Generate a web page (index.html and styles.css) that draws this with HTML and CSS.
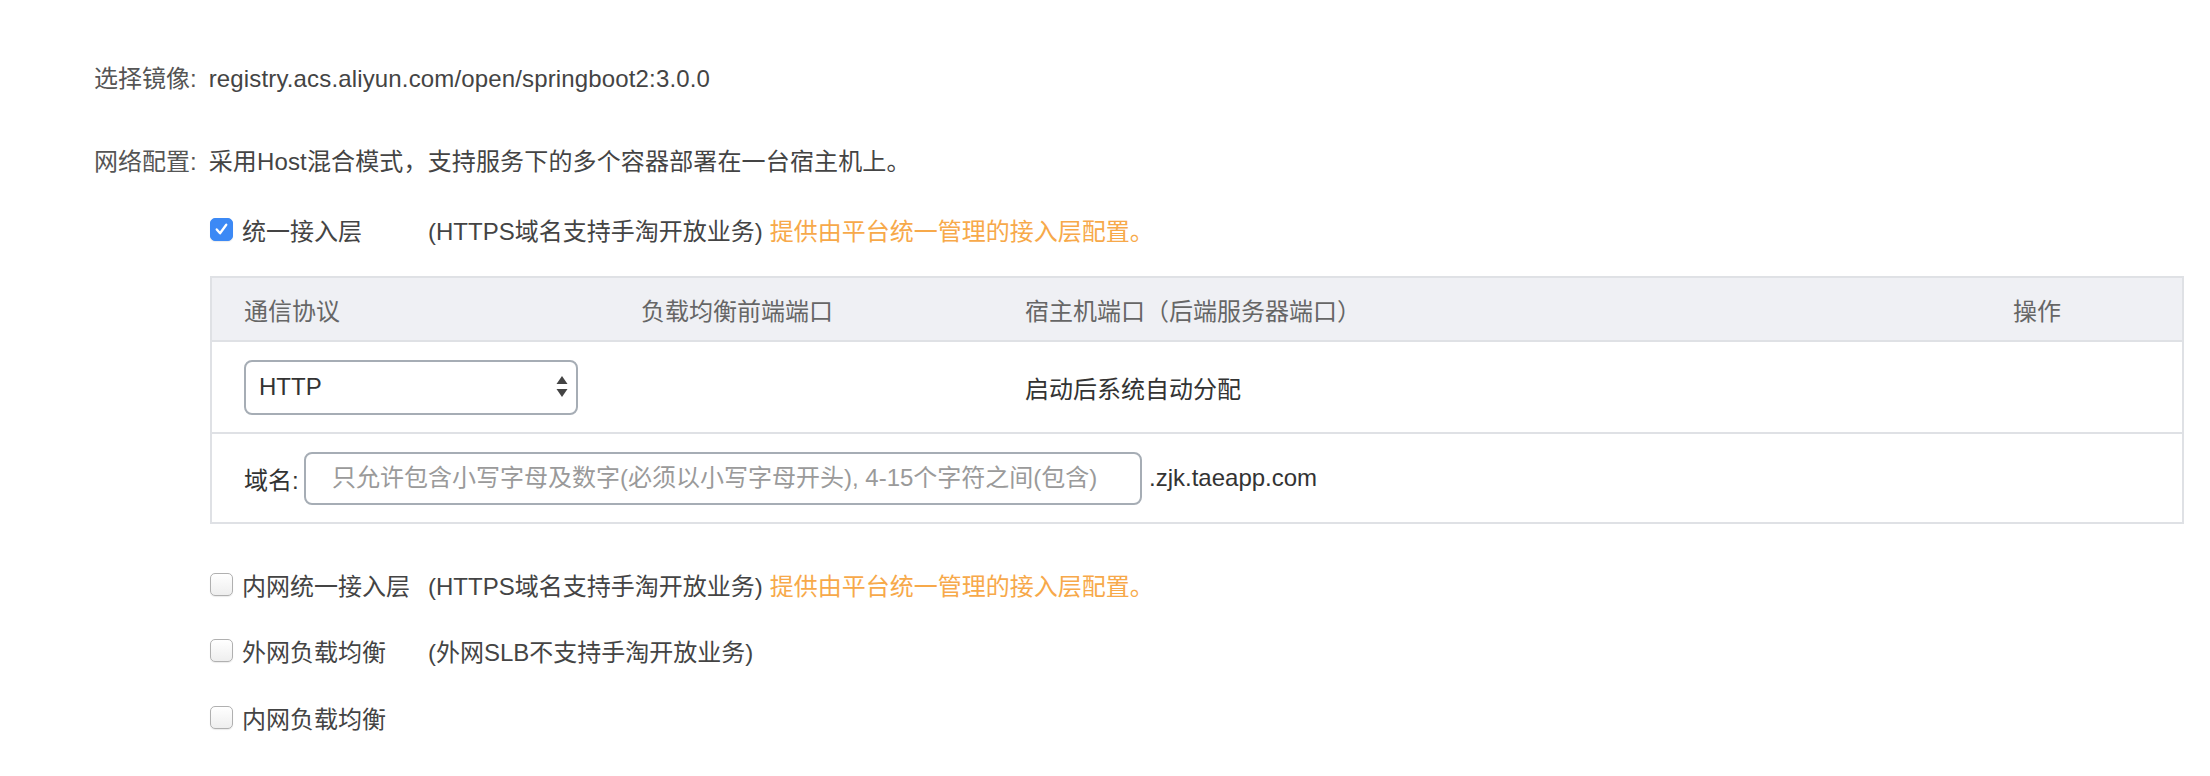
FILE: index.html
```html
<!DOCTYPE html>
<html lang="zh">
<head>
<meta charset="utf-8">
<title>配置</title>
<link rel="stylesheet" href="styles.css">
</head>
<body>
<div class="page">
  <div class="line"><span class="label">选择镜像:</span><span class="value">registry.acs.aliyun.com/open/springboot2:3.0.0</span></div>
  <div class="line line-2"><span class="label">网络配置:</span><span class="value">采用Host混合模式，支持服务下的多个容器部署在一台宿主机上。</span></div>

  <div class="options">
    <div class="check-row first">
      <span class="cb checked"><svg viewBox="0 0 22 22" width="22" height="22"><path d="M6 11.5 L9.5 15.5 L16 6.5" fill="none" stroke="#fff" stroke-width="2.4" stroke-linecap="round" stroke-linejoin="round"/></svg></span>
      <span class="cb-label">统一接入层</span>
      <span class="desc">(HTTPS域名支持手淘开放业务)</span>
      <span class="hint">提供由平台统一管理的接入层配置。</span>
    </div>

    <div class="table">
      <div class="thead">
        <div class="cell">通信协议</div>
        <div class="cell">负载均衡前端端口</div>
        <div class="cell">宿主机端口（后端服务器端口）</div>
        <div class="cell">操作</div>
      </div>
      <div class="trow row-1">
        <div class="cell">
          <div class="select">
            <span class="select-text">HTTP</span>
            <svg class="select-arrows" viewBox="0 0 12 22" width="12" height="22"><path d="M6 0 L11.5 8 L0.5 8 Z" fill="#444"/><path d="M0.5 13 L11.5 13 L6 21 Z" fill="#444"/></svg>
          </div>
        </div>
        <div class="cell"></div>
        <div class="cell dark">启动后系统自动分配</div>
        <div class="cell"></div>
      </div>
      <div class="trow row-2">
        <div class="domain">
          <span class="domain-label">域名:</span>
          <input class="domain-input" type="text" placeholder="只允许包含小写字母及数字(必须以小写字母开头), 4-15个字符之间(包含)">
          <span class="domain-suffix">.zjk.taeapp.com</span>
        </div>
      </div>
    </div>

    <div class="check-row second">
      <span class="cb"></span>
      <span class="cb-label">内网统一接入层</span>
      <span class="desc">(HTTPS域名支持手淘开放业务)</span>
      <span class="hint">提供由平台统一管理的接入层配置。</span>
    </div>
    <div class="check-row third">
      <span class="cb"></span>
      <span class="cb-label">外网负载均衡</span>
      <span class="desc">(外网SLB不支持手淘开放业务)</span>
    </div>
    <div class="check-row fourth">
      <span class="cb"></span>
      <span class="cb-label">内网负载均衡</span>
    </div>
  </div>
</div>
</body>
</html>
```
FILE: styles.css
```css
* { box-sizing: border-box; }
html, body {
  margin: 0;
  padding: 0;
  background: #fff;
}
body {
  font-family: "Liberation Sans", "Noto Sans CJK SC", sans-serif;
  font-size: 24px;
  color: #444;
}
.page {
  padding: 61px 0 0 94px;
}
.line {
  height: 36px;
  line-height: 36px;
  display: flex;
  white-space: nowrap;
  color: #555;
}
.line-2 { margin-top: 47px; }
.line .value { margin-left: 12px; color: #444; letter-spacing: 0.15px; }

.options {
  margin-left: 116px;
  margin-top: 31px;
  width: 1974px;
}
.check-row {
  height: 36px;
  display: flex;
  align-items: center;
  white-space: nowrap;
  color: #444;
}
.check-row.second { margin-top: 42px; }
.check-row.third { margin-top: 30px; }
.check-row.fourth { margin-top: 31px; }

.cb {
  width: 23px;
  height: 23px;
  border-radius: 5px;
  border: 1px solid #b0b0b0;
  background: linear-gradient(#ffffff, #eeeeee);
  box-shadow: 0 1px 1px rgba(0,0,0,0.08);
  margin-right: 9px;
  flex: none;
  display: flex;
  align-items: center;
  justify-content: center;
}
.cb.checked {
  background: #3c89f5;
  border-color: #3c89f5;
}
.cb-label { min-width: 186px; }
.desc { color: #444; }
.hint { color: #f7a94a; margin-left: 7px; }

.table {
  margin-top: 29px;
  border: 2px solid #dfe1e5;
}
.thead, .trow {
  display: grid;
  grid-template-columns: 397px 384px 988px 1fr;
  align-items: center;
}
.thead {
  height: 64px;
  background: #eff0f4;
  color: #666;
  border-bottom: 2px solid #dfe1e5;
}
.cell {
  padding-left: 32px;
  white-space: nowrap;
}
.cell.dark { color: #333; }
.row-1 {
  height: 92px;
  border-bottom: 2px solid #dfe1e5;
}
.row-2 {
  height: 88px;
  display: flex;
  align-items: center;
}
.select {
  position: relative;
  width: 334px;
  height: 55px;
  border: 2px solid #a6adb5;
  border-radius: 8px;
  display: flex;
  align-items: center;
  padding-left: 13px;
  color: #333;
  background: #fff;
}
.select-arrows {
  position: absolute;
  right: 8px;
  top: 14px;
}
.domain {
  display: flex;
  align-items: center;
  padding-left: 32px;
  white-space: nowrap;
}
.domain-label { color: #333; width: 60px; }
.domain-input {
  width: 838px;
  height: 53px;
  border: 2px solid #a6adb5;
  border-radius: 8px;
  padding: 0 0 0 26px;
  font-family: "Liberation Sans", "Noto Sans CJK SC", sans-serif;
  font-size: 24px;
  color: #333;
  outline: none;
  background: #fff;
}
.domain-input::placeholder { color: #9a9a9a; }
.domain-suffix { margin-left: 7px; color: #333; }
```
